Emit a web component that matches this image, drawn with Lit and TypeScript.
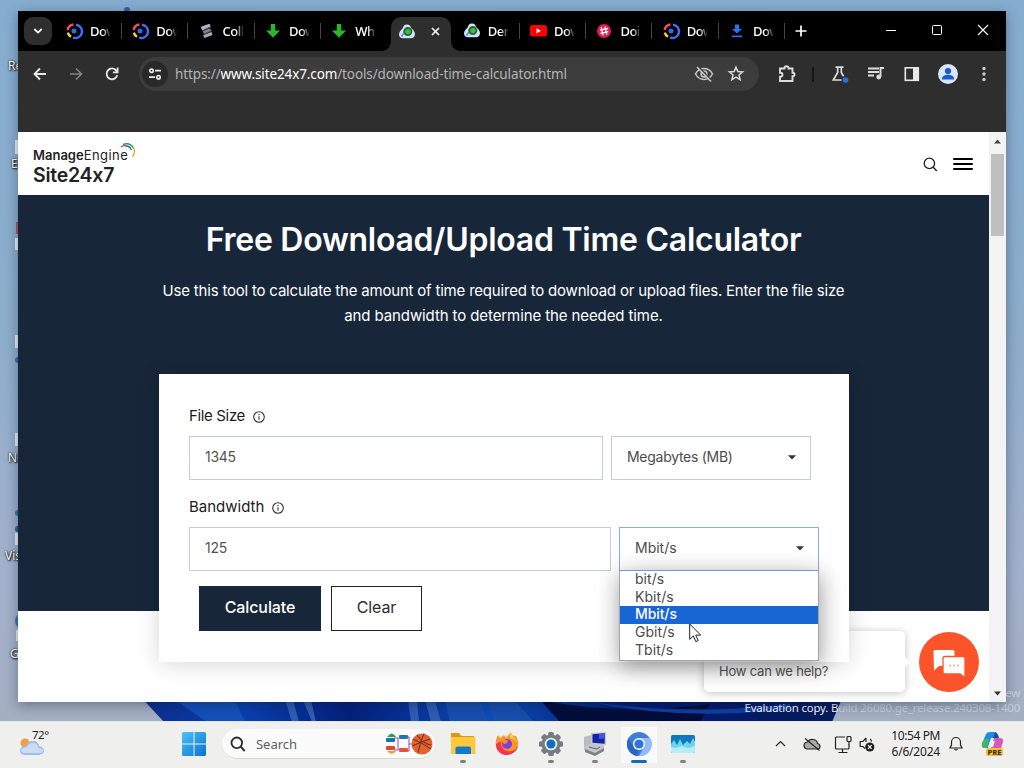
import { LitElement, html, css, svg } from "lit";
import { customElement, property } from "lit/decorators.js";
import { classMap } from "lit/directives/class-map.js";

/* ---------- favicons ---------- */
const ring = svg`<g fill="none" stroke-width="2.400">
  <path d="M1.600 7A6.600 6.600 0 0 1 7.400 1.500" stroke="#ff4a57"/>
  <path d="M10 1.800A6.600 6.600 0 1 1 7 14.500" stroke="#3f6df6"/>
  <path d="M1.800 9.600A6.600 6.600 0 0 0 5 13.800" stroke="#ffd21f"/></g>
  <circle cx="8" cy="8" r="2.500" fill="#2f6bf0"/>`;
const cloud = svg`<path d="M8 .4c2.500 0 3.700 1.700 4.100 3.500 2.200 1.800 4.100 3.800 3.900 6.700-.2 2.500-1.900 3.600-3.900 3.600H3.900C1.600 14.200 0 13 0 10.600c0-2.700 1.800-4.200 3.600-6.100C4.200 2 5.500.4 8 .4z" fill="#d3e2f8"/>
  <circle cx="8.800" cy="7.600" r="4.500" fill="#23623a"/><circle cx="9" cy="7.600" r="2.700" fill="#35c23c"/>
  <path d="M2.500 12.500l2.500-3.500" stroke="#5b86c8" stroke-width="1.500"/>`;
const favicons: Record<string, unknown> = {
  ring,
  cloud,
  coil: svg`<g transform="rotate(-20 8 8)"><rect x="3.500" y="2" width="9.500" height="4" rx="1" fill="#aeb6c0"/><rect x="4" y="6.500" width="8" height="3.500" rx="1" fill="#76808c"/><rect x="3" y="10.300" width="9" height="3.400" rx="1" fill="#a5adb5"/><path d="M3 6.500l10-1.300M3 10.500l10-1" stroke="#2d3540"/></g>`,
  arrow: svg`<path d="M5.800 1h4.400v6.400H15L8 14.800 1 7.400h4.800z" fill="#2db52a"/>`,
  tube: svg`<rect x="0" y="2" width="17" height="11.500" rx="2.500" fill="#f00"/><path d="M6.500 5.200v5.200L11 7.800z" fill="#fff"/>`,
  hash: svg`<circle cx="8" cy="8" r="7" fill="#e3195a"/><g stroke="#fff" stroke-width="1.300"><path d="M5.300 4l1.800 8.300M9 3.600l1.800 8.300M4 7.200l8-1.700M4.300 10.400l8-1.700"/></g>`,
  down: svg`<path d="M6 1.500h4V6h3l-5 4.500L3 6h3z" fill="#2c72ea"/><rect x="3" y="12.500" width="10" height="1.700" fill="#2c72ea"/>`,
};

const tabs = [
  { icon: "ring", title: "Dow" },
  { icon: "ring", title: "Dow" },
  { icon: "coil", title: "Coll" },
  { icon: "arrow", title: "Dow" },
  { icon: "arrow", title: "Wh" },
  { icon: "cloud", title: "", active: true },
  { icon: "cloud", title: "Der" },
  { icon: "tube", title: "Dow" },
  { icon: "hash", title: "Doi" },
  { icon: "ring", title: "Dow" },
  { icon: "down", title: "Dow" },
];

@customElement("browser-chrome")
class BrowserChrome extends LitElement {
  static styles = css`
    :host { display: block; height: 121px; background: #2e2e2e; font-family: "Noto Sans", "Open Sans", sans-serif; }
    svg { display: block; flex: none; overflow: visible; }
    .strip { height: 40px; background: #000; display: flex; align-items: center; }
    .search { width: 28px; height: 28px; border-radius: 9px; background: #2e2e2e; margin: 0 4px 0 6px; display: grid; place-items: center; flex: none; }
    .tab { width: 66.300px; height: 40px; flex: none; display: flex; align-items: center; padding: 0 0 0 10px; box-sizing: border-box; gap: 8px; }
    .title { color: #fff; font-size: 13px; line-height: 18px; font-weight: 500; width: 21px; overflow: hidden; white-space: nowrap; letter-spacing: -0.500px; -webkit-mask-image: linear-gradient(90deg, #000 60%, transparent 100%); }
    .sep { width: 1px; height: 16px; background: #454545; margin-left: 2px; }
    .active { padding: 6px 0 0; justify-content: center; }
    .shape { height: 34px; width: 60px; background: #2e2e2e; border-radius: 10px 10px 0 0; display: flex; align-items: center; padding: 0 11px 5px 8px; box-sizing: border-box; justify-content: space-between; position: relative; }
    .shape::before, .shape::after { content: ""; position: absolute; bottom: 0; width: 9px; height: 9px; }
    .shape::before { left: -9px; background: radial-gradient(circle at 0 0, transparent 8.500px, #2e2e2e 9px); }
    .shape::after { right: -9px; background: radial-gradient(circle at 100% 0, transparent 8.500px, #2e2e2e 9px); }
    .plus { margin-left: 10px; }
    .caption { margin-left: auto; display: flex; gap: 30px; margin-right: 15px; padding-bottom: 2px; }
    .bar { display: flex; align-items: center; height: 46px; padding-left: 14px; }
    .nav { display: flex; gap: 20px; width: 107px; }
    .omni { width: 620px; height: 34px; border-radius: 17px; background: #3c3c3c; display: flex; align-items: center; box-sizing: border-box; padding: 0 15px 0 3px; flex: none; }
    .tune { width: 26px; height: 26px; border-radius: 50%; background: #292929; display: grid; place-items: center; margin-right: 7px; }
    .url { font-size: 13.500px; color: #b4b4b4; white-space: nowrap; flex: 1; letter-spacing: -0.120px; }
    .host { color: #fff; }
    .marks { display: flex; gap: 14px; }
    .tools { display: flex; align-items: center; flex: 1; padding-left: 18px; }
    .rule { width: 2px; height: 15px; background: #161616; margin: 0 16px 0 15px; }
    .g { margin-right: 16px; }
  `;

  render() {
    return html`
      <div class="strip">
        <div class="search"><svg width="10" height="8" viewBox="0 0 10 8"><path d="M1.300 2L5 5.600 8.700 2" fill="none" stroke="#fff" stroke-width="1.800"/></svg></div>
        ${tabs.map((t, i) => {
          const icon = html`<svg width="16" height="16" viewBox="0 0 16 16">${favicons[t.icon]}</svg>`;
          return t.active
            ? html`<div class="tab active"><div class="shape">${icon}<svg width="9" height="9" viewBox="0 0 9 9"><path d="M1 1l7 7M8 1L1 8" stroke="#fff" stroke-width="1.600"/></svg></div></div>`
            : html`<div class="tab">${icon}<span class="title">${t.title}</span>${i === 4 ? "" : html`<span class="sep"></span>`}</div>`;
        })}
        <svg class="plus" width="12" height="12" viewBox="0 0 12 12"><path d="M6 .5v11M.5 6h11" stroke="#fff" stroke-width="1.700"/></svg>
        <div class="caption">
          <svg width="16" height="16"><path d="M3 8.500h10" stroke="#fff"/></svg>
          <svg width="16" height="16"><rect x="3.500" y="3.500" width="9" height="9" rx="1" fill="none" stroke="#fff"/></svg>
          <svg width="16" height="16"><path d="M3 3l10 10M13 3L3 13" stroke="#fff" stroke-width="1.100"/></svg>
        </div>
      </div>
      <div class="bar">
        <div class="nav">
          <svg width="16" height="16" viewBox="0 0 16 16"><path d="M14 8H3M8 2.500L2.500 8 8 13.500" fill="none" stroke="#e8e8e8" stroke-width="1.800"/></svg>
          <svg width="16" height="16" viewBox="0 0 16 16"><path d="M2 8h11M8 2.500L13.500 8 8 13.500" fill="none" stroke="#858585" stroke-width="1.600"/></svg>
          <svg width="16" height="16" viewBox="0 0 16 16"><path d="M13.200 9.300A5.400 5.400 0 1 1 12.300 4.600L13.200 5.600M13.600 1.500v4.800H8.900" fill="none" stroke="#e8e8e8" stroke-width="1.800"/></svg>
        </div>
        <div class="omni">
          <span class="tune"><svg width="14" height="14" viewBox="0 0 14 14"><g fill="none" stroke="#eee" stroke-width="1.700"><circle cx="3.500" cy="3.700" r="1.700"/><path d="M7 3.700h6M1 10.200h6"/><circle cx="10.500" cy="10.200" r="1.700"/></g></svg></span>
          <span class="url">https://<span class="host">www.site24x7.com</span>/tools/download-time-calculator.html</span>
          <span class="marks">
            <svg width="20" height="18" viewBox="0 0 20 18"><g fill="none" stroke="#c9c9c9" stroke-width="1.500"><path d="M1.500 9C3.500 5.300 6.500 3.600 10 3.600S16.500 5.300 18.500 9c-2 3.700-5 5.400-8.500 5.400S3.500 12.700 1.500 9z"/><circle cx="10" cy="9" r="2.900"/></g><path d="M4.500 2L18 16.500" stroke="#3c3c3c" stroke-width="2"/><path d="M3 2l14 14.500" stroke="#c9c9c9" stroke-width="1.600"/></svg>
            <svg width="16" height="18" viewBox="0 0 16 18"><path d="M8 2.200l1.900 4.300 4.700.4-3.600 3.100 1.100 4.600L8 12.200l-4.100 2.400L5 10 1.400 6.900l4.700-.4z" fill="none" stroke="#d8d8d8" stroke-width="1.500"/></svg>
          </span>
        </div>
        <div class="tools">
          <svg width="20" height="20" viewBox="0 0 20 20"><path d="M3 4.500h4.500v-.4a2 1.800 0 0 1 4 0v.4H15.500v4.200h.4a1.500 1.700 0 0 1 0 3.600h-.4V17H3v-4.200h.5a2 2 0 0 0 0-4H3z" fill="none" stroke="#ddd" stroke-width="1.900"/></svg>
          <span class="rule"></span>
          <svg class="g" width="20" height="20" viewBox="0 0 20 20"><path d="M5.500 3.200h8M7.700 3.500v5L3.300 16h8.200M11.300 3.500v5l2.300 3.700" fill="none" stroke="#ddd" stroke-width="1.700"/><circle cx="15.500" cy="16" r="2.800" fill="#2a70e8"/></svg>
          <svg class="g" width="20" height="20" viewBox="0 0 20 20"><path d="M2 4.500h11M2 8h11M2 11.500h6M14.500 13V4H18" fill="none" stroke="#ddd" stroke-width="1.900"/><circle cx="12.700" cy="13" r="2.400" fill="#ddd"/></svg>
          <svg class="g" width="20" height="20" viewBox="0 0 20 20"><rect x="3.300" y="3.800" width="13" height="12.500" fill="none" stroke="#e8e8e8" stroke-width="1.600"/><path d="M11 3.800h5.500v12.500H11z" fill="#e8e8e8"/></svg>
          <svg class="g" width="20" height="20" viewBox="0 0 20 20"><circle cx="10" cy="10" r="10" fill="#d8e6fc"/><circle cx="10" cy="7" r="3.100" fill="#1b5bd0"/><path d="M4 15.500v-1c0-2.500 3-3.800 6-3.800s6 1.300 6 3.800v1z" fill="#1b5bd0"/></svg>
          <svg width="20" height="20" viewBox="0 0 20 20"><g fill="#ccc"><circle cx="10" cy="4.500" r="1.700"/><circle cx="10" cy="10" r="1.700"/><circle cx="10" cy="15.500" r="1.700"/></g></svg>
        </div>
      </div>`;
  }
}

@customElement("unit-select")
class UnitSelect extends LitElement {
  @property() value = "";
  @property({ type: Boolean }) open = false;
  options = ["bit/s", "Kbit/s", "Mbit/s", "Gbit/s", "Tbit/s"];
  static styles = css`
    :host { display: block; width: 200px; height: 44px; position: relative; font-size: 14px; color: #4b4b4b; }
    .box { height: 44px; border: 1px solid #c8cbd9; box-sizing: border-box; background: #fff; display: flex; align-items: center; justify-content: space-between; padding: 0 14px 2px 15px; }
    .on { border-color: #86aee6; }
    .text { letter-spacing: -0.280px; padding-bottom: 1px; }
    .on .text { letter-spacing: 0; }
    .menu { position: absolute; z-index: 5; left: 0; top: 43px; width: 200px; height: 91px; box-sizing: border-box; border: 1px solid #a0a4aa; border-top-color: #7698cc; background: #fff; box-shadow: 1px 5px 22px rgba(0,0,0,.4); }
    .opt { height: 17.700px; line-height: 16px; padding-left: 15px; box-sizing: border-box; letter-spacing: 0.050px; }
    .sel { background: #1766d3; color: #fff; font-weight: 500; letter-spacing: -0.100px; }
    .mouse { position: absolute; left: 69px; top: 52px; }
  `;
  render() {
    return html`<div class=${classMap({ box: true, on: this.open })}><span class="text">${this.value}</span>
      <svg width="8" height="5" viewBox="0 0 8 5"><path d="M0 .2h8L4 4.600z" fill="#333"/></svg></div>
      ${this.open
        ? html`<div class="menu">${this.options.map((o) => html`<div class=${classMap({ opt: true, sel: o === this.value })}>${o}</div>`)}
            <svg class="mouse" width="13" height="20" viewBox="0 0 13 20"><path d="M.7 1v15.400l3.600-3.400 2.500 5.600 2.400-1.100-2.500-5.400h5z" fill="#fff" stroke="#222" stroke-width="1"/></svg></div>`
        : ""}`;
  }
}

@customElement("calculator-page")
class CalculatorPage extends LitElement {
  static styles = css`
    :host { display: flex; height: 570px; background: #fff; font-family: Inter, "Liberation Sans", sans-serif; position: relative; }
    svg { display: block; }
    .page { width: 971px; height: 570px; overflow: hidden; position: relative; }
    .head { height: 63px; display: flex; align-items: center; justify-content: space-between; padding: 0 16px 0 15px; box-sizing: border-box; }
    .logo { display: flex; flex-direction: column; color: #222; position: relative; padding-top: 5px; }
    .brand { font-size: 13px; line-height: 17px; letter-spacing: 0; }
    .brand b { font-weight: 600; }
    .eng { letter-spacing: 0.450px; }
    .product { font-size: 19.500px; line-height: 22px; font-weight: 600; letter-spacing: -0.250px; }
    .swirl { position: absolute; left: 86px; top: 0; }
    .acts { display: flex; gap: 15px; align-items: center; padding-top: 1px; }
    .hero { height: 416px; background: #18263a; color: #fff; text-align: center; padding-top: 24px; box-sizing: border-box; }
    .h { margin: 0; font-size: 32px; line-height: 42px; font-weight: 600; letter-spacing: -0.260px; white-space: nowrap; }
    .p { margin: 17px 0 0; font-size: 15px; line-height: 25px; letter-spacing: -0.100px; white-space: nowrap; }
    .first { letter-spacing: -0.200px; }
    .card { width: 690px; height: 288px; margin: -237px 0 0 141px; background: #fff; box-shadow: 0 2px 22px rgba(0,0,0,.16); box-sizing: border-box; padding: 29px 30px; position: relative; color: #222; }
    .label { display: flex; align-items: center; gap: 8px; height: 26px; font-size: 15px; color: #1c1c1c; padding-bottom: 2px; box-sizing: border-box; }
    .label svg { margin-top: 4px; }
    .label span { letter-spacing: 0; }
    .label .tight { letter-spacing: -0.350px; }
    .row { display: flex; gap: 8px; margin: 7px 0 14px; }
    .field { height: 44px; width: 414px; border: 1px solid #c8cbd9; box-sizing: border-box; display: flex; align-items: center; padding: 0 0 3px 15px; font-size: 14px; color: #555; letter-spacing: -0.300px; }
    .wide { width: 422px; flex: none; }
    .btns { display: flex; gap: 10px; padding-left: 10px; margin-top: 15px; }
    .btn { height: 45px; box-sizing: border-box; border: 1px solid #222; display: grid; place-items: center; font-size: 16px; width: 91px; color: #2d2d2d; padding-bottom: 3px; letter-spacing: -0.100px; }
    .primary { width: 122px; background: #18263a; border-color: #18263a; color: #fff; font-weight: 500; }
    .help { position: absolute; left: 686px; top: 499px; width: 201px; height: 61px; border-radius: 5px; background: #fff; box-shadow: 0 1px 8px rgba(0,0,0,.25); box-sizing: border-box; padding: 32px 0 0 15px; font-size: 13px; line-height: 17px; color: #555; white-space: nowrap; letter-spacing: -0.200px; }
    .help::after { content: ""; position: absolute; right: -5px; top: 25px; border: 6px solid transparent; border-left-color: #fff; border-right: 0; }
    .chat { position: absolute; left: 901px; top: 500px; }
    .scroll { width: 17px; background: #f3f3f3; display: flex; flex-direction: column; align-items: center; padding: 7px 0 6px; box-sizing: border-box; }
    .thumb { width: 13px; height: 82px; background: #bfbfbf; margin-top: 10px; }
    .end { margin-top: auto; }
    .over { z-index: 3; }
  `;
  info = html`<svg width="12" height="12" viewBox="0 0 12 12"><circle cx="6" cy="6" r="5.300" fill="none" stroke="#333" stroke-width="1.100"/><path d="M6 5.200v3.600M6 3v1.200" stroke="#333" stroke-width="1.100"/></svg>`;
  render() {
    return html`
      <div class="page">
        <div class="head">
          <div class="logo">
            <span class="brand"><b>Manage</b><span class="eng">Engine</span></span><span class="product">Site24x7</span>
            <svg class="swirl" width="17" height="18" viewBox="0 0 17 18"><g fill="none" stroke-width="1.400"><path d="M2 5Q4 3 7 4" stroke="#d93c3c"/><path d="M4 2.500Q11 0 14.500 6" stroke="#1c9b72"/><path d="M7 4Q11 4 12.500 8" stroke="#2c6d8d"/><path d="M14.500 5.500Q17 10 13.500 14.500" stroke="#c5b828"/></g></svg>
          </div>
          <div class="acts">
            <svg width="15" height="15" viewBox="0 0 15 15"><circle cx="6.400" cy="6.400" r="5.200" fill="none" stroke="#222" stroke-width="1.300"/><path d="M10.200 10.200l3.600 3.700" stroke="#222" stroke-width="1.400"/></svg>
            <svg width="20" height="12" viewBox="0 0 20 12"><path d="M1 1h18M1 6h18M1 11h18" stroke="#000" stroke-width="2" stroke-linecap="round"/></svg>
          </div>
        </div>
        <div class="hero">
          <h1 class="h">Free Download/Upload Time Calculator</h1>
          <p class="p"><span class="first">Use this tool to calculate the amount of time required to download or upload files. Enter the file size</span><br>and bandwidth to determine the needed time.</p>
        </div>
        <div class="card over">
          <div class="label"><span class="tight">File Size</span>${this.info}</div>
          <div class="row"><div class="field">1345</div><unit-select value="Megabytes (MB)"></unit-select></div>
          <div class="label"><span>Bandwidth</span>${this.info}</div>
          <div class="row"><div class="field wide">125</div><unit-select value="Mbit/s" open></unit-select></div>
          <div class="btns"><div class="btn primary">Calculate</div><div class="btn">Clear</div></div>
        </div>
        <div class="help">How can we help?</div>
        <svg class="chat" width="60" height="60" viewBox="0 0 60 60"><circle cx="30" cy="30" r="30" fill="#fb542b"/>
          <path d="M15 18h19a1.500 1.500 0 0 1 1.500 1.500V34H20l-5 4.500-.5-19z" fill="#fff"/>
          <path d="M26 24.500h18a2 2 0 0 1 2 2V46l-5-4H26a2 2 0 0 1-2-2V26.500a2 2 0 0 1 2-2z" fill="#fff" stroke="#fb542b" stroke-width="1.300"/>
          <g fill="#f8a58e"><circle cx="31" cy="33.500" r="1"/><circle cx="35" cy="33.500" r="1"/><circle cx="39" cy="33.500" r="1"/></g></svg>
      </div>
      <div class="scroll">
        <svg width="7" height="5"><path d="M0 4.500L3.500.5 7 4.500z" fill="#444"/></svg>
        <div class="thumb"></div>
        <svg class="end" width="7" height="5"><path d="M0 .5L3.500 4.500 7 .5z" fill="#333"/></svg>
      </div>`;
  }
}

const apps = [
  { run: true, art: svg`<path d="M1 2h8l2.500 3H24v4H1z" fill="#dd9a10"/><path d="M1 6h24.500v17H1z" fill="#fcc93c"/><path d="M5.500 23v-5.500q0-2 2-2H19q2 0 2 2V23z" fill="#1479c9"/>` },
  { run: false, art: svg`<path d="M22 5c3 5 3 11-1 15s-11 4.500-15.500 1S.5 10 4 4l2 3 4-3 2 3 5-6c0 3 2 4 5 4z" fill="#ff9526"/><path d="M2 13c0 8 6 11.500 11.500 11S24 19 24 14c-2 6-7 7-11 6S6 14 7 10z" fill="#f0354e"/><path d="M16 1c0 3 6 5 7 11-2-4-5-5-7-5z" fill="#ffd43d"/><circle cx="13" cy="13" r="5" fill="#7a40dc"/><path d="M7 9q5-2 7 1-1 3-4 3z" fill="#ff8a2d"/>` },
  { run: true, art: svg`<g fill="#767b80"><circle cx="13" cy="13" r="9.500"/>${[0, 45, 90, 135].map((a) => svg`<rect x="10.200" y="1" width="5.600" height="24" rx="1.500" transform=${`rotate(${a} 13 13)`}/>`)}</g><circle cx="13" cy="13" r="6.300" fill="#e9eef3"/><circle cx="13" cy="13" r="4.500" fill="#1170bd"/>` },
  { run: true, art: svg`<path d="M2 14l7-5 13 4v7l-9 4-11-5z" fill="#c3c6c9"/><path d="M3 18l10 4 9-5v3l-9 5-10-4z" fill="#7d8186"/><path d="M2 6l7-2v9l-7 3z" fill="#b8bcc0"/><path d="M9 2l15-1v13L9 13z" fill="#c3c9d0"/><path d="M10.500 3.300L22.700 2.300v10.500L10.500 11.800z" fill="#1522a6"/><path d="M17 3l5.700-.6v5L17 8z" fill="#3a5bdd"/><path d="M7 16l8 2 3-2" fill="none" stroke="#5b5f64"/>` },
  { run: true, active: true, art: svg`<circle cx="13" cy="13" r="12" fill="#3d7edb"/><path d="M13 7h11.300A12 12 0 0 1 13 25l5-9z" fill="#91bcf6"/><path d="M2.600 7L8 16l5 3-2 6A12 12 0 0 1 2.600 7z" fill="#2b66c6"/><circle cx="13" cy="13" r="6" fill="#fff"/><circle cx="13" cy="13" r="4.600" fill="#2f74dd"/>` },
  { run: true, art: svg`<rect x="1" y="4" width="24" height="18" rx="1.500" fill="#0f79bd"/><path d="M1 13l3-4 3 5 3-6 3 6 4-4 3 3 3-6 2 4v9.500q0 1-1.500 1h-21Q1 21.500 1 20.500z" fill="#6fd2ee"/><path d="M1 16l5 1 6-2 6 2 7-2v5.500q0 1.500-1.500 1.500h-21Q1 22 1 20.500z" fill="#b4ecf8"/>` },
];

@customElement("task-bar")
class TaskBar extends LitElement {
  static styles = css`
    :host { height: 47px; background: #efefee; border-top: 1px solid #e3e6ee; box-sizing: border-box; display: flex; align-items: center; font-family: "Noto Sans", "Open Sans", sans-serif; color: #222; position: relative; }
    svg { display: block; flex: none; }
    .weather { display: flex; width: 164px; padding-left: 18px; box-sizing: border-box; align-items: flex-start; }
    .sky { margin-top: 0; }
    .deg { font-size: 11.500px; line-height: 14px; letter-spacing: -0.500px; margin: -4px 0 0 -14px; }
    .find { width: 213px; height: 30px; border-radius: 15px; background: #fbfbfb; border-bottom: 1px solid #d6d6d6; box-sizing: border-box; margin-left: 16px; display: flex; align-items: center; padding: 0 0 0 8px; margin-top: -2px; }
    .ph { font-size: 13px; color: #5e5e5e; margin-left: 10px; flex: 1; letter-spacing: -0.020px; }
    .start { margin-left: 18px; margin-top: -2px; }
    .apps { display: flex; gap: 8px; margin-left: 10px; }
    .app { width: 36px; height: 46px; display: flex; flex-direction: column; align-items: center; padding-top: 9px; box-sizing: border-box; }
    .cur { background: linear-gradient(#f9f9f9, #f9f9f9) 0 5px / 36px 36px no-repeat; }
    .dot { width: 6px; height: 3px; border-radius: 2px; background: #808080; margin-top: 3px; }
    .cur .dot { width: 16px; background: #0f6cbd; }
    .tray { margin-left: auto; display: flex; align-items: center; padding-right: 20px; margin-top: -2px; }
    .speaker { margin-left: -11px; }
    .clock { font-size: 12px; line-height: 16px; letter-spacing: -0.400px; margin: 0 9px 0 14px; white-space: nowrap; width: 51px; display: flex; flex-direction: column; align-items: flex-end; }
    .day { letter-spacing: -0.200px; }
    .copilot { margin-left: 17px; }
  `;
  render() {
    return html`
      <div class="weather">
        <svg class="sky" width="28" height="26" viewBox="0 0 28 26"><circle cx="7" cy="11" r="4.500" fill="#f4a13c"/><path d="M8 23q-6 0-6-4.500T8 14q1-5 7-5 5 0 6 5 5 1 5 4.500t-5 4.500z" fill="#a0bdea"/><path d="M8 21q-5 0-5-2.500t6-3.500q2-4 6-4 5 0 5 5 5 0 5 2.500t-4 2.500z" fill="#cbdcf5"/></svg>
        <span class="deg">72°</span>
      </div>
      <svg class="start" width="24" height="24" viewBox="0 0 24 24"><defs><linearGradient id="w" x2="1" y2="1"><stop stop-color="#4cc2f5"/><stop offset="1" stop-color="#0a72cc"/></linearGradient></defs><path d="M1.500 0H11.500V11.500H0V1.500Q0 0 1.500 0zM12.500 0H22.500Q24 0 24 1.500V11.500H12.500zM0 12.500H11.500V24H1.500Q0 24 0 22.500zM12.500 12.500H24V22.500Q24 24 22.500 24H12.500z" fill="url(#w)"/></svg>
      <div class="find">
        <svg width="16" height="16" viewBox="0 0 16 16"><circle cx="6.800" cy="6.800" r="5.300" fill="none" stroke="#2a2a2a" stroke-width="1.800"/><path d="M10.700 10.700l4 4.300" stroke="#2a2a2a" stroke-width="1.900"/></svg>
        <span class="ph">Search</span>
        <svg width="50" height="26" viewBox="0 0 50 26"><path d="M9 7h4v12H9M18 6h6v14h-6M24 13h5" fill="none" stroke="#8e4bb0"/><path d="M2 6q5-7 9 0z" fill="#2e9c4c"/><rect x="1" y="7" width="9" height="4" rx="1" fill="#1771bd"/><rect x="14" y="4" width="9" height="4" rx="1" fill="#2374bd"/><rect x="1" y="15" width="9" height="4" rx="1" fill="#dc4c2b"/><rect x="14" y="17" width="9" height="4" rx="1" fill="#e05534"/><path d="M2 20h9q-4 6-9 0z" fill="#eda43c"/><circle cx="37" cy="13" r="10.500" fill="#e4622d"/><g fill="none" stroke="#6c2b1a"><path d="M28 8q8 3 18 10M39 2.500q-4 9-6 19M32 4q6 9 14 10M27 15q9-4 18-7"/></g></svg>
      </div>
      <div class="apps">
        ${apps.map((a) => html`<div class=${classMap({ app: true, cur: !!a.active })}><svg width="26" height="26" viewBox="0 0 26 26">${a.art}</svg>${a.run ? html`<span class="dot"></span>` : ""}</div>`)}
      </div>
      <div class="tray">
        <svg width="96" height="20" viewBox="0 0 96 20"><g fill="none" stroke="#222" stroke-width="1.200">
          <path d="M2 12l4.500-4.500L11 12"/>
          <path d="M33 15q-3-.5-3-3.500 0-3.200 3.500-3.500 2-3.500 6-2.500 3.500.5 4 4 2.500.5 2.500 3 0 2.500-3 2.500z" fill="#a9a9a9"/><path d="M31 4.500l14.500 12"/>
          <path d="M71 3H62.500q-1 0-1 1v10q0 1 1 1H74q1 0 1-1v-4M64.500 18.500h9M68.500 15v3"/><rect x="73" y="2.500" width="4" height="5" rx="1"/><path d="M75 7.500v3"/></g></svg>
        <svg class="speaker" width="16" height="20" viewBox="0 0 16 20"><path d="M7 4L4 7.500H1.200v5H4l2 2M7 4v4M11 5q1.500 1 1.500 2.500" fill="none" stroke="#222" stroke-width="1.200"/><circle cx="10.800" cy="13" r="4.600" fill="#222"/><path d="M9 11.200l3.600 3.600M12.600 11.200L9 14.800" stroke="#fff" stroke-width="1.200"/></svg>
        <div class="clock"><span>10:54 PM</span><span class="day">6/6/2024</span></div>
        <svg width="14" height="16" viewBox="0 0 14 16"><path d="M1 12l1.500-3V6a4.500 4.500 0 0 1 9 0v3L13 12zM5.500 13q1.500 2 3 0" fill="none" stroke="#222" stroke-width="1.200"/></svg>
        <svg class="copilot" width="24" height="26" viewBox="0 0 24 26"><path d="M6 3q1-2 4-2h4q2 0 3 3l1 3H11L8 17H5q-4 0-3-4z" fill="#1a8fe0"/><path d="M14 7h5q5 0 4 4l-2 6q-1 3-4 3h-7z" fill="#d759bd"/><path d="M2 12q2-5 7-4L7 17H4q-3-1-2-5z" fill="#40b56b"/><path d="M15 1q3 1 4 6h-6z" fill="#2548a6"/><path d="M10 10h5l-2 6H8z" fill="#e8edf8"/><rect x="6" y="17" width="17" height="8" rx="2" fill="#fcc21b"/><text x="14.500" y="23.700" text-anchor="middle" font-size="7.500" font-weight="700" font-family="Open Sans, sans-serif" fill="#222">PRE</text></svg>
      </div>`;
  }
}

@customElement("app-root")
class AppRoot extends LitElement {
  static styles = css`
    :host { display: block; width: 1024px; height: 768px; position: relative; overflow: hidden; background: #9ab0c8; }
    .wall { position: absolute; inset: 0; }
    .window { position: absolute; left: 18px; top: 11px; width: 988px; height: 691px; box-shadow: 0 3px 12px rgba(10,25,50,.4); overflow: hidden; }
    .icon { position: absolute; font: 12px/16px "Noto Sans", sans-serif; color: #fff; text-shadow: 0 0 2px #000, 1px 1px 2px #000; }
    .mark { position: absolute; right: 4px; top: 685px; text-align: right; font: 11.400px/15px "Noto Sans", sans-serif; color: #c9d2de; white-space: nowrap; letter-spacing: -0.170px; }
    .lit { color: #fff; }
    task-bar { position: absolute; left: 0; right: 0; top: 721px; }
  `;
  labels = [
    { t: "Re", x: 8, y: 58 },
    { t: "Ed", x: 11, y: 156 },
    { t: "No", x: 8, y: 450 },
    { t: "Vis", x: 5, y: 548 },
    { t: "Go", x: 10, y: 646 },
  ];
  render() {
    return html`
      <svg class="wall" width="1024" height="768" viewBox="0 0 1024 768">
        <defs>
          <linearGradient id="s" x2="0" y2="1"><stop stop-color="#86add0"/><stop offset=".45" stop-color="#8eaecb"/><stop offset=".75" stop-color="#a3b1cc"/><stop offset="1" stop-color="#a4aebd"/></linearGradient>
          <linearGradient id="d"><stop stop-color="#0c2f8c"/><stop offset=".15" stop-color="#0a3fae"/><stop offset=".3" stop-color="#04207c"/><stop offset=".5" stop-color="#0d4cb8"/><stop offset=".7" stop-color="#031c74"/><stop offset="1" stop-color="#061c5c"/></linearGradient>
        </defs>
        <rect width="1024" height="768" fill="url(#s)"/>
        <path d="M138 694H844L832 722H164z" fill="url(#d)"/>
        <path d="M175 700h60l10 22h-38z" fill="#1450ba"/>
        <path d="M285 700h8l6 22h-7zM303 700h8l5 22h-4zM408 700h9l2 22h-8zM425 700h10l6 22h-10z" fill="#2f5db4"/>
        <path d="M445 700h35l8 22h-38zM488 700h26l20 22h-40z" fill="#174fae"/>
        <path d="M540 700Q620 716 710 704L700 722H560z" fill="#020d3c"/>
        <path d="M590 702q100 14 200 2v5q-110 12-200-7z" fill="#0f3fa4"/>
        <g><rect x="15" y="140" width="4" height="14" fill="#e8eff5"/><rect x="16" y="222" width="3" height="12" fill="#a65c60"/><rect x="15" y="238" width="4" height="12" fill="#e8eff5"/><rect x="15" y="335" width="4" height="13" fill="#e8eff5"/><circle cx="18" cy="360" r="3" fill="#3c6ea5"/><rect x="15" y="433" width="4" height="13" fill="#e8eff5"/><circle cx="18" cy="513" r="3" fill="#237b94"/><circle cx="18" cy="529" r="3" fill="#285f9d"/><rect x="15" y="533" width="4" height="12" fill="#e8eff5"/><circle cx="23" cy="621" r="8" fill="#3a73bd"/><rect x="16" y="630" width="3" height="11" fill="#e8eff5"/><circle cx="127" cy="10" r="3" fill="#4a55a8"/></g>
      </svg>
      ${this.labels.map((l) => html`<span class="icon" style="left:${l.x}px;top:${l.y}px">${l.t}</span>`)}
      <div class="mark">Windows 11 Pro Insider Preview<br><span class="lit">Evaluation copy. B</span>uild 26080.ge_release.240308-1400</div>
      <div class="window">
        <browser-chrome></browser-chrome>
        <calculator-page></calculator-page>
      </div>
      <task-bar></task-bar>`;
  }
}
